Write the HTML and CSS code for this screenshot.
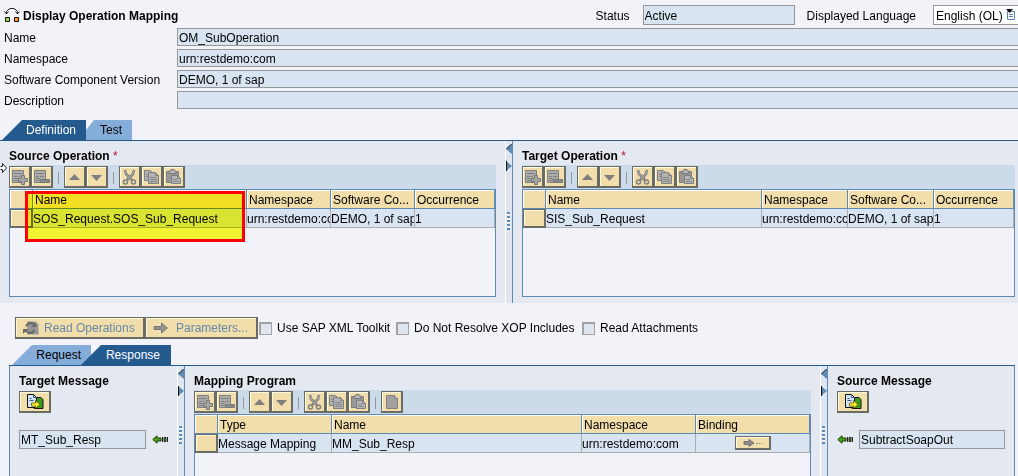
FILE: index.html
```html
<!DOCTYPE html>
<html lang="en">
<head>
<meta charset="utf-8">
<title>Display Operation Mapping</title>
<link rel="stylesheet" href="styles.css">
</head>
<body>
<svg class="sprite" aria-hidden="true">
  <symbol id="i-add" viewBox="0 0 17 16"><path d="M1.500 1.500h11v12h-11z" fill="#acacac" stroke="#808080"/><path d="M3 4.500h8M3 7.500h3M7 7.500h2M3 9.500h4M3 11.500h5" stroke="#808080"/><path d="M10.500 6.500h3v3h3v3h-3v3h-3v-3h-3v-3h3z" fill="#a8a8a8" stroke="#787878"/></symbol>
  <symbol id="i-del" viewBox="0 0 17 16"><path d="M1.500 1.500h11v12h-11z" fill="#acacac" stroke="#808080"/><path d="M3 4.500h8M3 7.500h3M7 7.500h4M3 9.500h4M3 11.500h4" stroke="#808080"/><path d="M7.500 10.500h9v3h-9z" fill="#8a8a8a" stroke="#777"/></symbol>
  <symbol id="i-up" viewBox="0 0 17 16"><path d="M3 11l5.500-6 5.500 6z" fill="#7e7e7e"/></symbol>
  <symbol id="i-down" viewBox="0 0 17 16"><path d="M3 6l5.500 6 5.500-6z" fill="#7e7e7e"/></symbol>
  <symbol id="i-cut" viewBox="0 0 17 16"><path d="M4 1l1 4 6 6M13 1l-1 4-6 6" fill="none" stroke="#808080" stroke-width="2.600"/><path d="M4 2l1 3 5 5M13 2l-1 3-5 5" fill="none" stroke="#b8b8b8" stroke-width=".8"/><circle cx="4.500" cy="13" r="2" fill="none" stroke="#808080" stroke-width="1.500"/><circle cx="12.500" cy="13" r="2" fill="none" stroke="#808080" stroke-width="1.500"/></symbol>
  <symbol id="i-copy" viewBox="0 0 17 16"><path d="M1.500 1.500h6l2 2v8h-8z" fill="#b2b2b2" stroke="#808080"/><path d="M5.500 3.500h7l3 3v8h-10z" fill="#b2b2b2" stroke="#808080"/><path d="M12.500 3.500v3h3M7 8.500h6M7 10.500h7M7 12.500h7M3 5.500h2M3 7.500h2" fill="none" stroke="#858585"/></symbol>
  <symbol id="i-paste" viewBox="0 0 17 16"><path d="M1.500 2.500h12v11h-12z" fill="#989898" stroke="#808080"/><path d="M4 4.500V2h2V.5h3V2h2v2.500z" fill="#bbb" stroke="#777"/><path d="M6.500 6.500h6l3 3v5h-9z" fill="#b6b6b6" stroke="#808080"/><path d="M12.500 6.500v3h3M8 10.500h4M8 12.500h6" fill="none" stroke="#858585"/></symbol>
  <symbol id="i-new" viewBox="0 0 17 16"><path d="M3.500 1.500h8l3 3v10h-11z" fill="#a2a2a2" stroke="#828282"/><path d="M11.500 1.500v3h3" fill="#c4c4c4" stroke="#828282"/></symbol>
  <symbol id="i-open" viewBox="0 0 18 16"><path d="M8 3.500h7l2 2v9H8z" fill="#3c9a1c" stroke="#111"/><path d="M1.500 .5h6l3 3v10h-9z" fill="#d3e4f6" stroke="#111"/><path d="M7.500 .5v3h3M3.500 4.500h2M3.500 6.500h4" fill="none" stroke="#3a5f92"/><path d="M5.500 9h4V6.500l4.500 4-4.500 4V12h-4z" fill="#ffed28" stroke="#665500" stroke-width=".8"/></symbol>
  <symbol id="i-flow" viewBox="0 0 16 9"><path d="M.8 4.500L5 .8v2.200h4v3H5v2.200z" fill="#4aa51c" stroke="#153c04"/><path d="M10.500 2v5M15.500 2v5" stroke="#222"/><path d="M12 2.500h2v4h-2z" fill="#4aa51c" stroke="#222"/></symbol>
  <symbol id="i-arrow" viewBox="0 0 16 12"><path d="M1 4.500h7.500V1l6 5-6 5V7.500H1z" fill="#929292" stroke="#787878"/></symbol>
</svg>

<main class="page">
  <header class="head">
    <svg class="head-icon" viewBox="0 0 16 16" aria-hidden="true"><path d="M2.500 7V4.500L5 2l2-.5h2l2 .5 2.500 2.500V7" fill="none" stroke="#222"/><path d="M.5 4.500l2 2.500 2-2.500M11.500 4.500l2 2.500 2-2.500" fill="none" stroke="#222"/><path d="M1.500 10.500h4v4h-4z" fill="#a8dc50" stroke="#111"/><path d="M10.500 10.500h4v4h-4z" fill="#ff9a1a" stroke="#111"/></svg>
    <h1 class="title">Display Operation Mapping</h1>
    <label class="head-label" for="status">Status</label>
    <input class="field status" id="status" value="Active" readonly>
    <label class="head-label head-label-lang" for="lang">Displayed Language</label>
    <span class="lang">
      <select class="lang-select" id="lang"><option>English (OL)</option></select>
      <svg class="lang-icon" viewBox="0 0 10 11" aria-hidden="true"><path d="M1.500 2.500h7v8h-7z" fill="#fff" stroke="#5a84b4"/><path d="M3 5.500h4M3 7.500h4" stroke="#5a84b4"/><path d="M0 0h7L3.500 4z" fill="#111"/></svg>
    </span>
  </header>

  <section class="form">
    <label for="f1">Name</label><input class="field" id="f1" value="OM_SubOperation" readonly>
    <label for="f2">Namespace</label><input class="field" id="f2" value="urn:restdemo:com" readonly>
    <label for="f3">Software Component Version</label><input class="field" id="f3" value="DEMO, 1 of sap" readonly>
    <label for="f4">Description</label><input class="field" id="f4" value="" readonly>
  </section>

  <nav class="tabs tabs-main">
    <button class="tab tab-on tab-first">Definition</button>
    <button class="tab tab-after">Test</button>
  </nav>

  <section class="ops">
    <svg class="grip" viewBox="0 0 7 10" aria-hidden="true"><path d="M.5 3.500h2v-3l4 4.500-4 4.500v-3h-2" fill="#fff" stroke="#222"/></svg>
    <div class="pane">
      <h2 class="pane-title">Source Operation <span class="req">*</span></h2>
      <div class="toolbar">
        <button class="tool" aria-label="Insert" disabled><svg><use href="#i-add"/></svg></button>
        <button class="tool" aria-label="Delete" disabled><svg><use href="#i-del"/></svg></button>
        <span class="sep"></span>
        <button class="tool" aria-label="Up" disabled><svg><use href="#i-up"/></svg></button>
        <button class="tool" aria-label="Down" disabled><svg><use href="#i-down"/></svg></button>
        <span class="sep"></span>
        <button class="tool" aria-label="Cut" disabled><svg><use href="#i-cut"/></svg></button>
        <button class="tool" aria-label="Copy" disabled><svg><use href="#i-copy"/></svg></button>
        <button class="tool" aria-label="Paste" disabled><svg><use href="#i-paste"/></svg></button>
      </div>
      <div class="grid">
        <table class="table">
          <colgroup><col class="c-sel"><col><col class="c-84"><col class="c-84"><col class="c-80"></colgroup>
          <thead><tr><th></th><th>Name</th><th>Namespace</th><th>Software Co...</th><th>Occurrence</th></tr></thead>
          <tbody><tr><td class="sel"><button class="rowbtn" aria-label="Select row"></button></td><td>SOS_Request.SOS_Sub_Request</td><td>urn:restdemo:com</td><td>DEMO, 1 of sap</td><td>1</td></tr></tbody>
        </table>
        <div class="marker"></div>
      </div>
    </div>
    <div class="split">
      <svg class="split-arrows" viewBox="0 0 6 27" aria-hidden="true"><path d="M6 0v10L0 5z" fill="#5f8ab3"/><path d="M5.500 0L.5 5" stroke="#111"/><path d="M0 17l6 5-6 5z" fill="#5f8ab3"/><path d="M.5 17v10" stroke="#111"/></svg>
      <span class="dots"></span>
    </div>
    <div class="pane pane-end">
      <h2 class="pane-title">Target Operation <span class="req">*</span></h2>
      <div class="toolbar">
        <button class="tool" aria-label="Insert" disabled><svg><use href="#i-add"/></svg></button>
        <button class="tool" aria-label="Delete" disabled><svg><use href="#i-del"/></svg></button>
        <span class="sep"></span>
        <button class="tool" aria-label="Up" disabled><svg><use href="#i-up"/></svg></button>
        <button class="tool" aria-label="Down" disabled><svg><use href="#i-down"/></svg></button>
        <span class="sep"></span>
        <button class="tool" aria-label="Cut" disabled><svg><use href="#i-cut"/></svg></button>
        <button class="tool" aria-label="Copy" disabled><svg><use href="#i-copy"/></svg></button>
        <button class="tool" aria-label="Paste" disabled><svg><use href="#i-paste"/></svg></button>
      </div>
      <div class="grid">
        <table class="table">
          <colgroup><col class="c-sel"><col><col class="c-86"><col class="c-86"><col class="c-80"></colgroup>
          <thead><tr><th></th><th>Name</th><th>Namespace</th><th>Software Co...</th><th>Occurrence</th></tr></thead>
          <tbody><tr><td class="sel"><button class="rowbtn" aria-label="Select row"></button></td><td>SIS_Sub_Request</td><td>urn:restdemo:com</td><td>DEMO, 1 of sap</td><td>1</td></tr></tbody>
        </table>
      </div>
    </div>
  </section>

  <section class="actions">
    <button class="btn btn-read" disabled><svg class="btn-icon" viewBox="0 0 17 16" aria-hidden="true"><path d="M4.500 1h9l3 3v11h-12z" fill="#969696"/><path d="M13.500 1v3h3" fill="#bbb"/><path d="M3 6l3-3h4l2 2M12 10l-2 3H6l-3-2" fill="none" stroke="#666" stroke-width="2"/><path d="M9 7h5V2zM6 9H0v5z" fill="#666"/></svg>Read Operations</button><button class="btn btn-param" disabled><svg class="btn-icon" aria-hidden="true"><use href="#i-arrow"/></svg>Parameters...</button>
    <label class="check"><input type="checkbox" disabled>Use SAP XML Toolkit</label>
    <label class="check"><input type="checkbox" disabled>Do Not Resolve XOP Includes</label>
    <label class="check"><input type="checkbox" disabled>Read Attachments</label>
  </section>

  <nav class="tabs tabs-sub">
    <button class="tab tab-request">Request</button>
    <button class="tab tab-on tab-response">Response</button>
  </nav>

  <section class="maps">
    <div class="pane">
      <h2 class="pane-title"><label for="tm">Target Message</label></h2>
      <button class="open" aria-label="Open target message"><svg><use href="#i-open"/></svg></button>
      <div class="msg">
        <input class="field" id="tm" value="MT_Sub_Resp" readonly>
        <svg class="flow" aria-hidden="true"><use href="#i-flow"/></svg>
      </div>
    </div>
    <div class="split split-low">
      <svg class="split-arrows" viewBox="0 0 6 27" aria-hidden="true"><path d="M6 0v10L0 5z" fill="#5f8ab3"/><path d="M5.500 0L.5 5" stroke="#111"/><path d="M0 17l6 5-6 5z" fill="#5f8ab3"/><path d="M.5 17v10" stroke="#111"/></svg>
      <span class="dots"></span>
    </div>
    <div class="pane pane-mid">
      <h2 class="pane-title">Mapping Program</h2>
      <div class="toolbar">
        <button class="tool" aria-label="Insert" disabled><svg><use href="#i-add"/></svg></button>
        <button class="tool" aria-label="Delete" disabled><svg><use href="#i-del"/></svg></button>
        <span class="sep"></span>
        <button class="tool" aria-label="Up" disabled><svg><use href="#i-up"/></svg></button>
        <button class="tool" aria-label="Down" disabled><svg><use href="#i-down"/></svg></button>
        <span class="sep"></span>
        <button class="tool" aria-label="Cut" disabled><svg><use href="#i-cut"/></svg></button>
        <button class="tool" aria-label="Copy" disabled><svg><use href="#i-copy"/></svg></button>
        <button class="tool" aria-label="Paste" disabled><svg><use href="#i-paste"/></svg></button>
        <span class="sep"></span>
        <button class="tool" aria-label="New" disabled><svg><use href="#i-new"/></svg></button>
      </div>
      <div class="grid grid-open">
        <table class="table">
          <colgroup><col class="c-sel"><col class="c-114"><col><col class="c-114"><col class="c-114"></colgroup>
          <thead><tr><th></th><th>Type</th><th>Name</th><th>Namespace</th><th>Binding</th></tr></thead>
          <tbody><tr><td class="sel"><button class="rowbtn" aria-label="Select row"></button></td><td>Message Mapping</td><td>MM_Sub_Resp</td><td>urn:restdemo:com</td><td class="bind"><button class="bindbtn" aria-label="Edit binding" disabled><svg viewBox="0 0 20 8"><path d="M1 2.500h5V.500L11 4 6 7.500v-2H1z" fill="#888" stroke="#777"/><path d="M13 4.500h2M16 4.500h1M18 4.500h1" stroke="#888"/></svg></button></td></tr></tbody>
        </table>
      </div>
    </div>
    <div class="split split-low">
      <svg class="split-arrows" viewBox="0 0 6 27" aria-hidden="true"><path d="M6 0v10L0 5z" fill="#5f8ab3"/><path d="M5.500 0L.5 5" stroke="#111"/><path d="M0 17l6 5-6 5z" fill="#5f8ab3"/><path d="M.5 17v10" stroke="#111"/></svg>
      <span class="dots"></span>
    </div>
    <div class="pane">
      <h2 class="pane-title"><label for="sm">Source Message</label></h2>
      <button class="open" aria-label="Open source message"><svg><use href="#i-open"/></svg></button>
      <div class="msg">
        <svg class="flow" aria-hidden="true"><use href="#i-flow"/></svg>
        <input class="field" id="sm" value="SubtractSoapOut" readonly>
      </div>
    </div>
  </section>
</main>
</body>
</html>
```
FILE: styles.css
```css
* { box-sizing: border-box; }
body { margin: 0; background: #f2f3f8; color: #000; font: 12px/16px "Liberation Sans", Arial, sans-serif; }
button, input, select { font: inherit; color: inherit; border-radius: 0; margin: 0; }
.sprite { display: none; }
.page { display: flex; flex-direction: column; min-height: 100vh; overflow: hidden; }

.head { display: flex; align-items: center; height: 28px; padding: 2px 0 0 4px; }
.head-icon { width: 16px; height: 16px; margin-right: 3px; }
.title { flex: 1; margin: 0; font-size: 12px; font-weight: bold; padding-top: 1px; }
.head-label { margin-right: 13px; padding-top: 1px; }
.head-label-lang { margin-right: 17px; }
.field { min-width: 0; height: 18px; padding: 1px 1px 0; border: 1px solid #979797; background: #d9e4f2; outline: none; }
.field.status { width: 152px; height: 20px; margin-right: 12px; }
.lang { position: relative; width: 85px; }
.lang-select { display: block; appearance: none; width: 100%; height: 20px; padding: 1px 2px 0; border: 1px solid #979797; border-right: 0; background: #fff; }
.lang-icon { position: absolute; right: 2px; top: 4px; width: 10px; height: 11px; pointer-events: none; }

.form { display: grid; grid-template-columns: 173px minmax(0, 1fr); row-gap: 3px; padding-left: 4px; align-items: center; }
.form label { padding-top: 2px; }
.form .field { border-right: 0; }

.tabs { display: flex; height: 21px; border-bottom: 1px solid #255a8f; }
.tabs-main { margin-top: 11px; padding-left: 2px; }
.tabs-sub { margin: 0 3px 0 9px; padding-left: 3px; }
.tab { height: 20px; border: 0; padding: 1px 0 0; background: #85add9; text-align: right; line-height: 19px; }
.tab-on { background: #255a8f; color: #fff; }
.tab-first { width: 84px; padding-right: 10px; clip-path: polygon(20px 0, 100% 0, 100% 100%, 0 100%); }
.tab-after { width: 46px; padding-right: 10px; clip-path: polygon(8px 0, 100% 0, 100% 100%, 0 100%, 0 10px); }
.tab-request { width: 79px; padding-right: 10px; clip-path: polygon(20px 0, 100% 0, 100% 100%, 0 100%); }
.tab-response { width: 90px; margin-left: -10px; padding-right: 11px; clip-path: polygon(20px 0, 100% 0, 100% 100%, 0 100%); }

.ops { position: relative; display: grid; grid-template-columns: minmax(0, 1fr) 8px minmax(0, 1fr); background: #e4e9f1; }
.grip { position: absolute; left: 0; top: 22px; width: 7px; height: 10px; }
.pane { min-width: 0; padding: 0 9px 6px; }
.pane-end { padding-right: 3px; }
.pane-title { margin: 0; padding: 7px 0 1px; font-size: 12px; line-height: 16px; font-weight: bold; }
.req { color: #b01030; font-weight: normal; }

.toolbar { display: flex; padding: 1px 0; background: #cbdbe9; }
.tool, .open, .btn, .rowbtn, .bindbtn { border: 1px solid #6b6b66; border-right-width: 2px; border-bottom-width: 2px; background: #f2deab; box-shadow: inset 1px 1px #fffbe0; }
.tool { width: 22px; height: 22px; padding: 1px; }
.tool svg { display: block; width: 17px; height: 16px; }
.sep { width: 1px; height: 12px; margin: 6px 5px 0; background: #979797; }

.grid { position: relative; height: 108px; border: 1px solid #5f8ab3; background: #f2f3f8; }
.grid-open { height: auto; min-height: 62px; flex: 1; border-bottom: 0; }
.table { width: 100%; table-layout: fixed; border-collapse: separate; border-spacing: 0; }
.c-sel { width: 23px; }
.c-80 { width: 80px; }
.c-84 { width: 84px; }
.c-86 { width: 86px; }
.c-114 { width: 114px; }
th, td { height: 19px; overflow: hidden; white-space: nowrap; text-align: left; font-weight: normal; line-height: 16px; }
th { padding: 2px 0 0 2px; border-right: 1px solid #5f8ab3; border-bottom: 1px solid #5f8ab3; background: #f2deab; box-shadow: inset 1px 1px #fff; }
td { padding: 2px 0 0; border-right: 1px solid #adadad; border-bottom: 1px solid #adadad; background: #d9e4f2; }
td.sel { padding: 0; border: 0; }
td.bind { padding: 0; }
.rowbtn { display: block; width: 23px; height: 19px; padding: 0; }
.bindbtn { display: block; width: 36px; height: 14px; margin: 0 auto; padding: 1px 7px; }
.bindbtn svg { display: block; width: 20px; height: 8px; }
.marker { position: absolute; left: 15px; top: 1px; width: 220px; height: 51px; border: 3px solid #f00; pointer-events: none; }
.marker::before { content: ""; position: absolute; inset: 0; background: #ffff34; mix-blend-mode: multiply; }

.split { display: flex; flex-direction: column; padding-top: 3px; background: #dfe6ef; border-left: 1px solid #fff; border-right: 1px solid #5f8ab3; }
.split-arrows { width: 6px; height: 27px; }
.dots { width: 3px; height: 18px; margin: 41px 0 0 1px; background: repeating-linear-gradient(#5f8ab3 0 2px, #fff 2px 3px, #dfe6ef 3px 4px); }
.split-low .dots { margin-top: 30px; }

.actions { display: flex; align-items: center; height: 36px; margin-top: 6px; padding: 2px 0 0 15px; }
.btn { display: flex; align-items: center; height: 22px; padding: 0 5px 0 7px; color: #6688aa; }
.btn-read { width: 130px; }
.btn-param { width: 113px; }
.btn-icon { width: 16px; height: 16px; margin-right: 5px; flex: none; }
.btn-param .btn-icon { height: 12px; margin-right: 7px; }
.check { display: flex; align-items: center; width: 137px; }
.check + .check { width: 186px; }
.check input { appearance: none; width: 13px; height: 13px; margin: 0 5px 0 1px; border: 2px solid #a2a2a4; border-right-width: 1px; border-bottom-width: 1px; background: #dfe6ef; }

.maps { flex: 1; display: grid; grid-template-columns: 167px 8px minmax(0, 1fr) 8px 186px; margin: 0 3px 0 9px; border-left: 1px solid #5f8ab3; border-right: 1px solid #5f8ab3; background: #e4e9f1; }
.maps .pane { padding-bottom: 0; }
.pane-mid { display: flex; flex-direction: column; }
.open { display: block; width: 32px; height: 22px; margin-top: 1px; padding: 1px 6px; }
.open svg { display: block; width: 18px; height: 16px; }
.msg { display: flex; align-items: center; gap: 6px; margin-top: 17px; }
.msg .field { flex: 1; height: 19px; }
.flow { width: 16px; height: 9px; flex: none; }
```
